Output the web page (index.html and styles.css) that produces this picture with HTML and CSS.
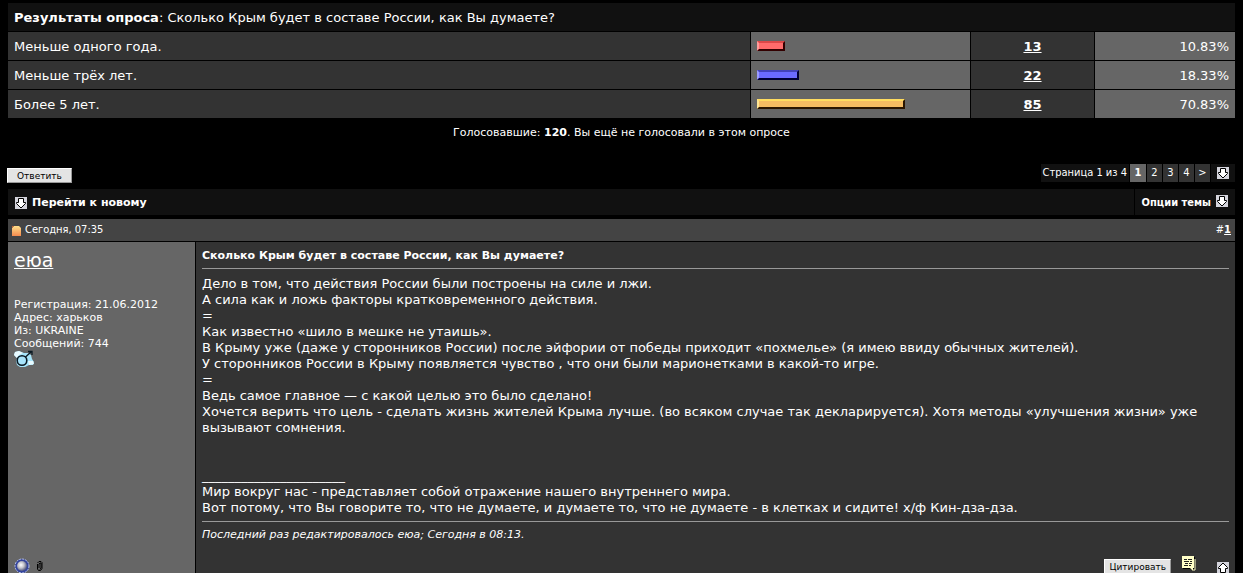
FILE: index.html
```html
<!DOCTYPE html>
<html lang="ru">
<head>
    <meta charset="UTF-8">
    <meta name="viewport" content="width=device-width, initial-scale=1.0">
    <title>Сколько Крым будет в составе России, как Вы думаете?</title>
    <link rel="stylesheet" href="styles.css">
</head>
<body>

    <svg class="defs" aria-hidden="true">
        <symbol id="arrow" viewBox="0 0 12 12">
            <rect width="12" height="12" fill="#d4d4dc"/>
            <path d="M3.5 1.5h5v4h2v1l-4.500 4.500l-4.500-4.500v-1h2z" fill="#fff" stroke="#000"/>
        </symbol>
    </svg>

    <table class="poll">
        <colgroup>
            <col>
            <col class="col-bar">
            <col class="col-votes">
            <col class="col-percent">
        </colgroup>
        <thead>
            <tr>
                <th colspan="4"><strong>Результаты опроса</strong>: Сколько Крым будет в составе России, как Вы думаете?</th>
            </tr>
        </thead>
        <tbody>
            <tr>
                <td>Меньше одного года.</td>
                <td class="alt"><div class="bar red" style="width: 28px"></div></td>
                <td class="votes"><a href="#">13</a></td>
                <td class="alt percent">10.83%</td>
            </tr>
            <tr>
                <td>Меньше трёх лет.</td>
                <td class="alt"><div class="bar blue" style="width: 42px"></div></td>
                <td class="votes"><a href="#">22</a></td>
                <td class="alt percent">18.33%</td>
            </tr>
            <tr>
                <td>Более 5 лет.</td>
                <td class="alt"><div class="bar orange" style="width: 148px"></div></td>
                <td class="votes"><a href="#">85</a></td>
                <td class="alt percent">70.83%</td>
            </tr>
        </tbody>
    </table>
    <p class="voters">Голосовавшие: <strong>120</strong>. Вы ещё не голосовали в этом опросе</p>

    <div class="actions">
        <button type="button" class="btn">Ответить</button>
        <nav class="pager">
            <span class="pager-label">Страница 1 из 4</span>
            <span class="current">1</span>
            <a href="#">2</a>
            <a href="#">3</a>
            <a href="#">4</a>
            <a href="#">&gt;</a>
            <button type="button" class="icon-btn" aria-label="Перейти к странице"><svg width="12" height="12"><use href="#arrow"/></svg></button>
        </nav>
    </div>

    <div class="toolbar">
        <a href="#" class="tool grow"><svg width="12" height="12"><use href="#arrow"/></svg>Перейти к новому</a>
        <a href="#" class="tool options">Опции темы<svg class="raised" width="12" height="12"><use href="#arrow"/></svg></a>
    </div>

    <article class="post">
        <header class="post-head">
            <svg width="10" height="11" viewBox="0 0 10 11">
                <defs>
                    <linearGradient id="sheet" x1="0" y1="0" x2="0" y2="1">
                        <stop offset="0" stop-color="#ffe08a"/>
                        <stop offset="1" stop-color="#f58a4e"/>
                    </linearGradient>
                </defs>
                <path d="M2 1h5l2 2v8H0V3z" fill="url(#sheet)"/>
                <path d="M0 1h2L0 3z" fill="#c0603a"/>
            </svg>
            <span>Сегодня, 07:35</span>
            <span class="post-number">#<a href="#">1</a></span>
        </header>
        <div class="post-body">
            <aside class="user">
                <a href="#" class="user-name">еюа</a>
                <div class="user-info">
                    <div>Регистрация: 21.06.2012</div>
                    <div>Адрес: харьков</div>
                    <div>Из: UKRAINE</div>
                    <div>Сообщений: 744</div>
                </div>
                <svg width="21" height="18" viewBox="0 0 21 18" role="img" aria-label="Мужской">
                    <path d="M1 2l4-1l5 2h4l3 2l1 4l2 3l-1 3h-4l-4 2H6l-3-2l-1-4l1-3l-3-3z" fill="#a6e4fa"/>
                    <path d="M1 2l4-1l4 2l-4 2l-2 3l-3-3zM14 11l5 0l1 3l-5 1z" fill="#e8faff"/>
                    <circle cx="8" cy="10.500" r="4.800" fill="#a8e4fb" stroke="#0a1a24" stroke-width="1.600"/>
                    <path d="M11.500 7l5.500-5M14 1.500h4v3.500" fill="none" stroke="#0a1a24" stroke-width="1.300"/>
                </svg>
                <div class="user-status">
                    <svg width="16" height="16" viewBox="0 0 16 16" role="img" aria-label="Не в сети">
                        <defs>
                            <radialGradient id="ball" cx="0.4" cy="0.4" r="0.6">
                                <stop offset="0" stop-color="#fff"/>
                                <stop offset="0.5" stop-color="#c4c4cc"/>
                                <stop offset="1" stop-color="#555a80"/>
                            </radialGradient>
                        </defs>
                        <circle cx="8" cy="8" r="7" fill="#34449c" stroke="#b8c4f4" stroke-dasharray="2 1"/>
                        <circle cx="8" cy="8" r="5" fill="url(#ball)"/>
                    </svg>
                    <svg width="8" height="12" viewBox="0 0 8 12" role="img" aria-label="Вложения">
                        <path d="M3 8V4l1-1h1v5l-1 1.500M1.500 4v5l1 1.500h2l1.500-2V2.500l-1-1H3L1.500 3" fill="none" stroke="#000"/>
                    </svg>
                </div>
            </aside>
            <div class="message">
                <h1>Сколько Крым будет в составе России, как Вы думаете?</h1>
                <div class="text">
                    Дело в том, что действия России были построены на силе и лжи.<br>
                    А сила как и ложь факторы кратковременного действия.<br>
                    =<br>
                    Как известно «шило в мешке не утаишь».<br>
                    В Крыму уже (даже у сторонников России) после эйфории от победы приходит «похмелье» (я имею ввиду обычных жителей).<br>
                    У сторонников России в Крыму появляется чувство , что они были марионетками в какой-то игре.<br>
                    =<br>
                    Ведь самое главное — с какой целью это было сделано!<br>
                    Хочется верить что цель - сделать жизнь жителей Крыма лучше. (во всяком случае так декларируется). Хотя методы «улучшения жизни» уже вызывают сомнения.
                </div>
                <div class="signature">
                    ______________________<br>
                    Мир вокруг нас - представляет собой отражение нашего внутреннего мира.<br>
                    Вот потому, что Вы говорите то, что не думаете, и думаете то, что не думаете - в клетках и сидите! х/ф Кин-дза-дза.
                </div>
                <p class="edited">Последний раз редактировалось еюа; Сегодня в 08:13.</p>
                <div class="post-controls">
                    <button type="button" class="btn">Цитировать</button>
                    <button type="button" class="icon-btn note" aria-label="Быстрый ответ">
                        <svg width="14" height="16" viewBox="0 0 14 16">
                            <path d="M2 1h11v13h-2v1l-3-2H1V1z" fill="#000"/>
                            <path d="M0 0h12v12h-1v3l-3-3H0z" fill="#ffffc8"/>
                            <path d="M13 3v11h-2" fill="none" stroke="#ffffc8"/>
                            <path d="M2 3.500h3m1 0h4M2 5.500h5m1 0h2M3 7.500h3m1 0h3M2 9.500h4m1 0h2" stroke="#222"/>
                        </svg>
                    </button>
                    <button type="button" class="icon-btn" aria-label="Наверх"><svg class="up" width="12" height="12"><use href="#arrow"/></svg></button>
                </div>
            </div>
        </div>
    </article>

</body>
</html>
```
FILE: styles.css
```css
* {
    box-sizing: border-box;
}
body {
    margin: 0;
    padding: 3px 8px 0;
    background-color: #000;
    color: #fff;
    font-family: Verdana, 'DejaVu Sans', sans-serif;
    font-size: 13px;
    line-height: 16px;
}
a {
    color: #fff;
}
svg {
    display: block;
    flex-shrink: 0;
}
.defs {
    display: none;
}
.poll {
    width: 100%;
    border-collapse: separate;
    border-spacing: 0;
    table-layout: fixed;
}
.poll th {
    padding: 7px 6px 5px;
    background-color: #111;
    font-weight: normal;
    text-align: left;
}
.poll td {
    padding: 7px 6px 5px;
    border-top: 1px solid #000;
    border-left: 1px solid #000;
    background-color: #333;
}
.poll td:first-child {
    border-left: none;
}
.poll td.alt {
    background-color: #666;
}
.col-bar {
    width: 220px;
}
.col-votes {
    width: 124px;
}
.col-percent {
    width: 141px;
}
.poll .votes {
    text-align: center;
    font-weight: bold;
}
.poll .percent {
    text-align: right;
}
.bar {
    height: 10px;
    margin-bottom: 2px;
    border: 2px solid;
}
.red {
    background-color: #ff6b6b;
    border-color: #dc4848 #300 #300 #ff9a9a;
}
.blue {
    background-color: #6b6bff;
    border-color: #4343b8 #003 #003 #9a9aff;
}
.orange {
    background-color: #f5bc62;
    border-color: #ffdd60 #2a1500 #2a1500 #ffe594;
}
.voters {
    margin: 7px 0 23px;
    font-size: 11px;
    text-align: center;
}
.actions {
    display: flex;
    align-items: center;
    justify-content: space-between;
    height: 18px;
    margin-bottom: 7px;
}
.btn {
    height: 15px;
    padding: 0 9px;
    border: 1px solid #fff;
    border-right-color: #999;
    border-bottom-color: #999;
    background-color: #e4e4e4;
    color: #000;
    font-family: 'DejaVu Sans', sans-serif;
    font-size: 9px;
    line-height: 12px;
}
.actions .btn {
    align-self: flex-end;
    margin: 0 0 -1px -1px;
}
.icon-btn {
    padding: 0;
    border: none;
    background: none;
}
.pager {
    display: flex;
    gap: 1px;
    font-family: Tahoma, 'DejaVu Sans Condensed', sans-serif;
    font-size: 11px;
    line-height: 18px;
    text-align: center;
}
.pager > * {
    width: 15px;
    background-color: #333;
    text-decoration: none;
}
.pager .pager-label {
    width: auto;
    padding: 0 2px;
    background-color: #111;
}
.pager .current {
    width: 16px;
    background-color: #666;
    font-weight: bold;
}
.pager .icon-btn {
    width: 24px;
    padding: 0 6px;
    background-color: #111;
}
.toolbar {
    display: flex;
    gap: 1px;
    margin-bottom: 4px;
}
.tool {
    display: flex;
    align-items: center;
    gap: 5px;
    padding: 6px 7px 4px;
    background-color: #111;
    font-size: 11px;
    font-weight: bold;
    text-decoration: none;
}
.grow {
    flex: 1;
}
.options {
    font-family: Tahoma, 'DejaVu Sans Condensed', sans-serif;
}
.raised {
    margin-bottom: 4px;
}
.post-head {
    display: flex;
    align-items: center;
    gap: 3px;
    padding: 3px 4px;
    background-color: #444;
    font-family: Tahoma, 'DejaVu Sans Condensed', sans-serif;
    font-size: 11px;
}
.post-number {
    margin-left: auto;
}
.post-number a {
    font-weight: bold;
}
.post-body {
    display: grid;
    grid-template-columns: 187px 1fr;
    gap: 1px;
    margin-top: 1px;
}
.user {
    display: flex;
    flex-direction: column;
    align-items: flex-start;
    padding: 6px 6px 0;
    background-color: #666;
}
.user-name {
    font-size: 19px;
    line-height: 24px;
}
.user-info {
    margin-top: 26px;
    font-size: 11px;
    line-height: 13px;
}
.user-status {
    display: flex;
    align-items: center;
    gap: 6px;
    margin-top: auto;
}
.message {
    padding: 6px 6px 0;
    background-color: #333;
}
.message h1 {
    margin: 0 0 7px;
    padding-bottom: 4px;
    border-bottom: 1px solid #999;
    font-size: 11px;
    line-height: 16px;
}
.signature {
    margin-top: 32px;
}
.edited {
    margin: 5px 0 0;
    padding-top: 5px;
    border-top: 1px solid #999;
    font-size: 11px;
    font-style: italic;
}
.post-controls {
    display: flex;
    align-items: flex-end;
    justify-content: flex-end;
    margin-top: 13px;
}
.post-controls .btn {
    padding: 0 4px;
}
.note {
    margin: 0 21px 2px 11px;
}
.up {
    transform: rotate(180deg);
}
```
